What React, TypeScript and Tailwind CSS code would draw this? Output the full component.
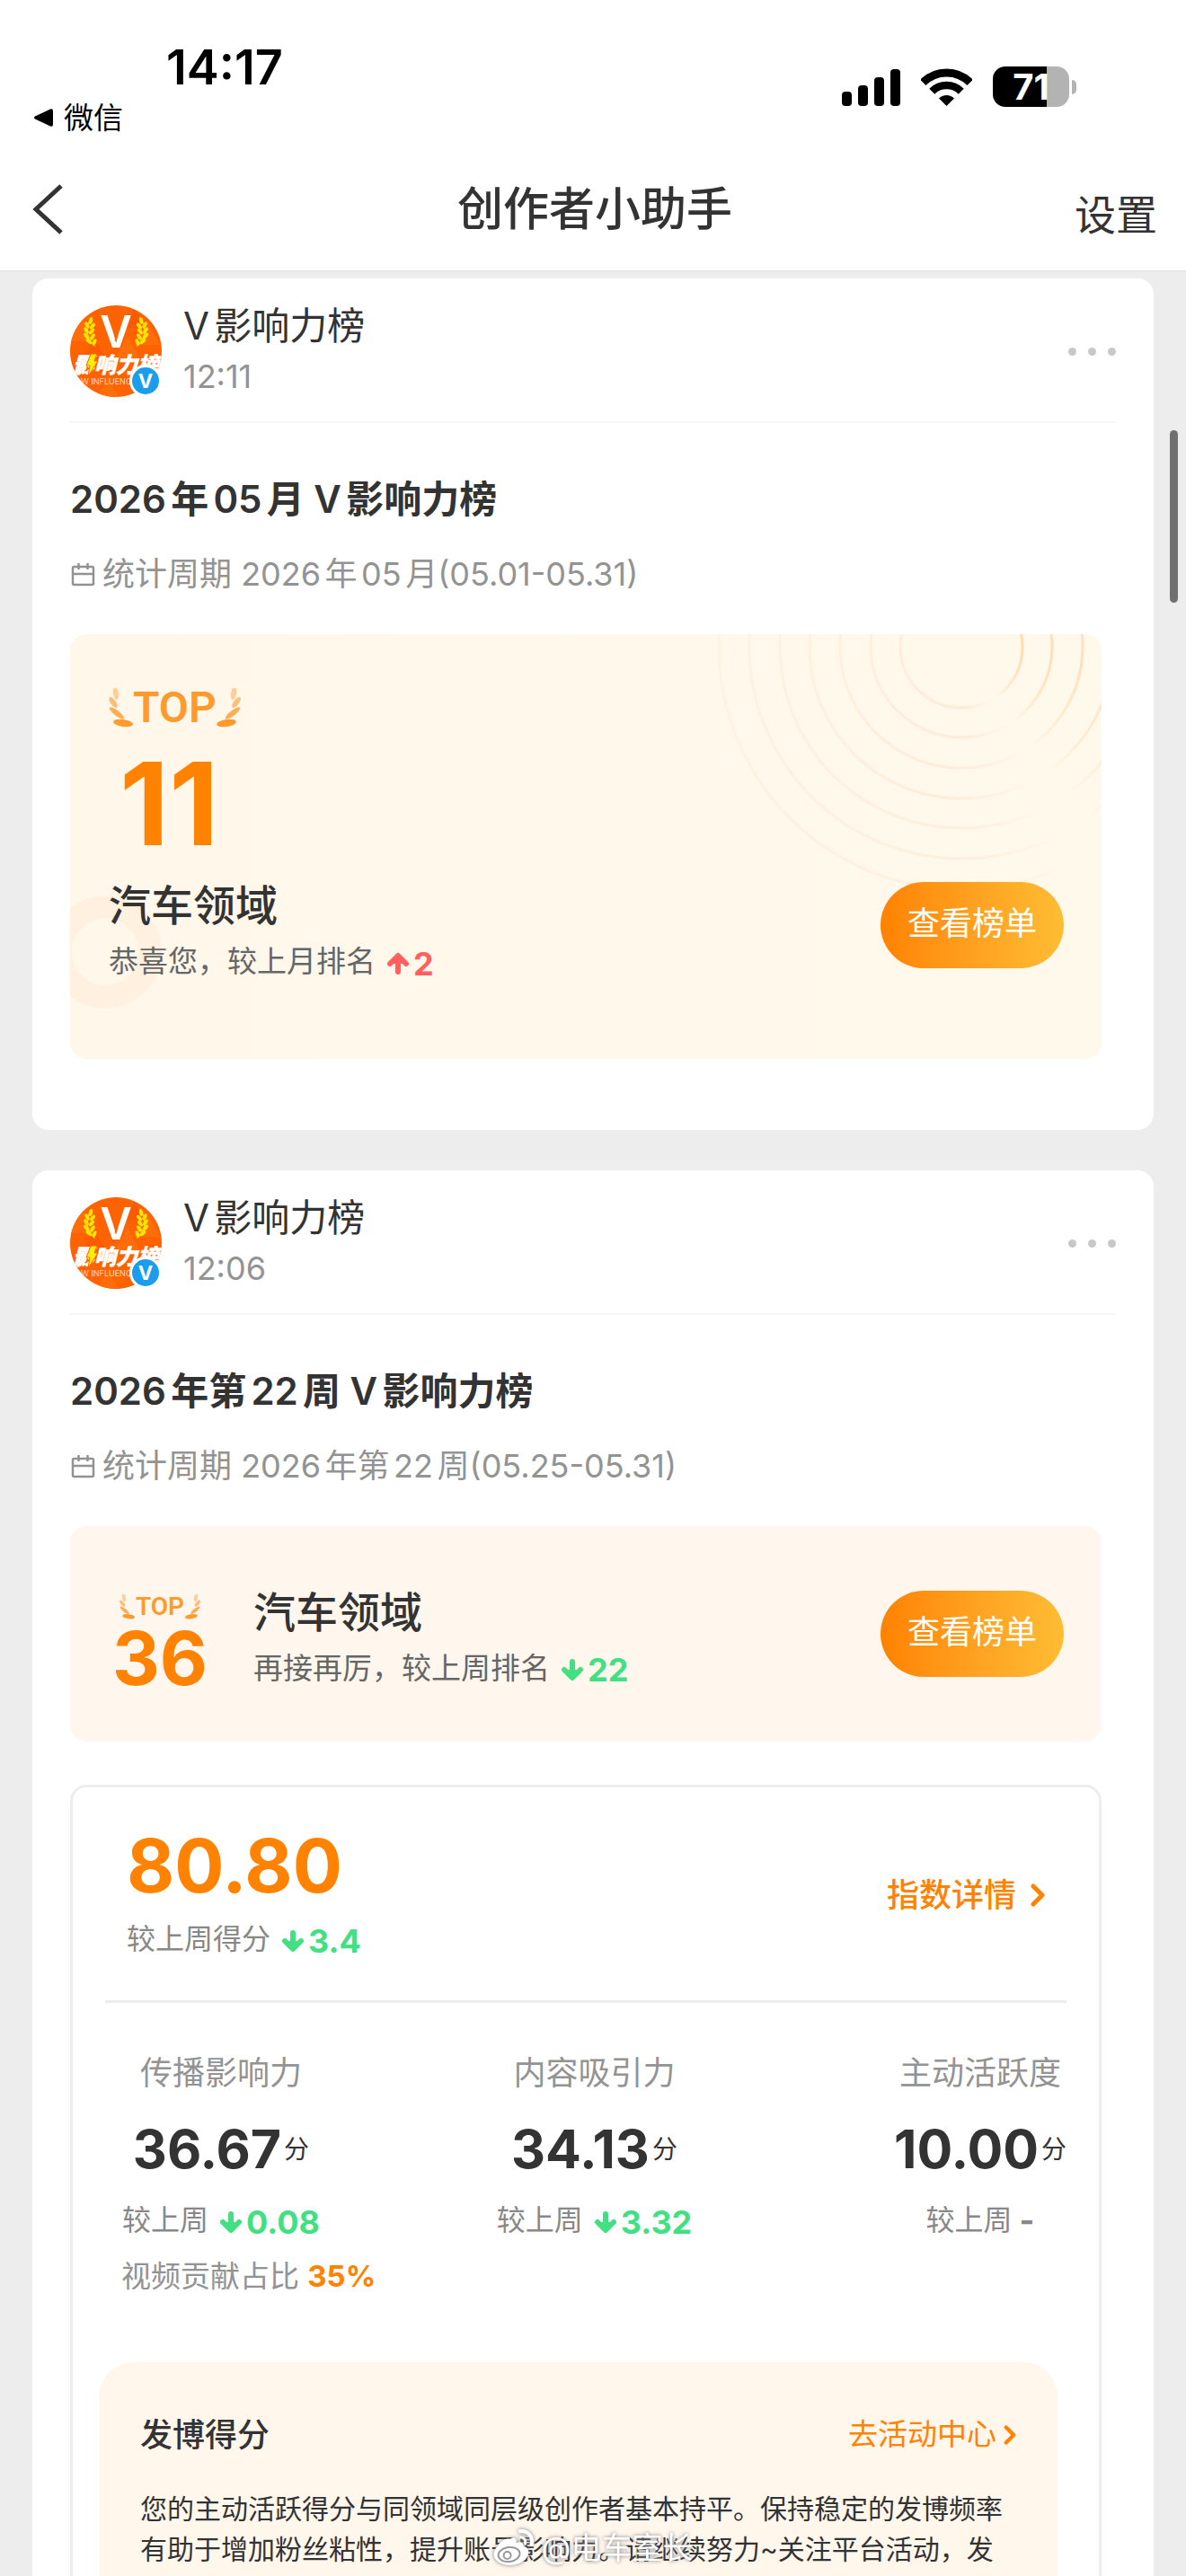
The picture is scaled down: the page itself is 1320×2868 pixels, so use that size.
import type { ReactNode } from 'react';

interface Metric {
  label: string;
  score: string;
  diff: string | null;
  video?: string;
}

interface PostCardProps {
  time: string;
  title: string;
  period: string;
  children: ReactNode;
}

const METRICS: Metric[] = [
  { label: '传播影响力', score: '36.67', diff: '0.08', video: '35%' },
  { label: '内容吸引力', score: '34.13', diff: '3.32' },
  { label: '主动活跃度', score: '10.00', diff: null },
];

const RING_RADII = [68, 101, 135, 169, 202, 236, 270];

// feuilles : cx, cy, demi-largeur, demi-longueur, angle, opacité
const LEAVES = [
  [8, 6, 3, 7, -10, 0.45],
  [5, 16, 3, 7, -36, 0.6],
  [9, 28, 3, 10, -52, 0.8],
  [16, 39, 4, 11, -82, 1],
];

function LaurelLeaf({ className }: { className: string }) {
  return (
    <svg className={className} viewBox="0 0 27 44" fill="#ff9a2e" aria-hidden="true">
      {LEAVES.map(([cx, cy, rx, ry, angle, opacity]) => (
        <ellipse
          key={cy}
          cx={cx}
          cy={cy}
          rx={rx}
          ry={ry}
          opacity={opacity}
          transform={`rotate(${angle} ${cx} ${cy})`}
        />
      ))}
    </svg>
  );
}

function TopBadge({ small = false }: { small?: boolean }) {
  const leaf = small ? 'h-7 w-[17px]' : 'h-11 w-[27px]';
  return (
    <div className={`flex items-center justify-center ${small ? 'gap-px' : ''}`}>
      <LaurelLeaf className={leaf} />
      <span
        className={`font-['Roboto'] font-semibold text-[#ff9a2e] ${small ? 'text-[28px] leading-[28px]' : 'text-[48px] leading-[44px]'}`}
      >
        TOP
      </span>
      <LaurelLeaf className={`${leaf} -scale-x-100`} />
    </div>
  );
}

function ChangeArrow({ up = false }: { up?: boolean }) {
  return (
    <svg
      className={`size-[26px] ${up ? '' : 'rotate-180'}`}
      viewBox="0 0 26 26"
      fill="none"
      stroke="currentColor"
      strokeWidth={6}
      strokeLinecap="round"
      strokeLinejoin="round"
      aria-hidden="true"
    >
      <path d="M13 22V7" />
      <path d="M4 13L13 4l9 9" />
      <path d="M9 11h8" strokeWidth={4} />
    </svg>
  );
}

function Change({ value, up = false }: { value: string; up?: boolean }) {
  return (
    <span
      className={`ml-3 flex items-center gap-1 pt-[3px] text-[36px] font-bold ${up ? 'text-[#ff6060]' : 'text-[#43df83]'}`}
    >
      <ChangeArrow up={up} />
      {value}
    </span>
  );
}

function Chevron({ className }: { className: string }) {
  return (
    <svg
      className={className}
      viewBox="0 0 16 26"
      fill="none"
      stroke="currentColor"
      strokeWidth={5}
      strokeLinecap="round"
      strokeLinejoin="round"
      aria-hidden="true"
    >
      <path d="M3 3l10 10L3 23" />
    </svg>
  );
}

function WheatEar({ transform }: { transform?: string }) {
  return (
    <g transform={transform} fill="#ffe600">
      <path d="M28 46Q14 34 22 15" fill="none" stroke="#ffe600" strokeWidth={1} />
      {[[23, 17, 12], [19, 22, -28], [25, 23, 40], [18, 28, -32], [24, 29, 40], [18, 34, -40], [25, 35, 32], [21, 40, -50], [27, 41, 20]].map(([x, y, a]) => (
        <ellipse key={`${x}-${y}`} cx={x} cy={y} rx={2} ry={4} transform={`rotate(${a} ${x} ${y})`} />
      ))}
    </g>
  );
}

function Avatar() {
  return (
    <div className="relative size-[102px] shrink-0">
      <svg className="size-full rounded-full" viewBox="0 0 102 102" role="img" aria-label="V影响力榜">
        <rect width={102} height={102} fill="#ff6200" />
        <path d="M0 40l14-26 14 26zM70 44l15-28 15 28zM30 102l12-22 12 22zM50 60l14-26 14 26z" fill="#ff6e08" />
        <path d="M14 60l13-24 13 24zM60 26L72 4l12 22z" fill="#fa5a00" />
        <WheatEar />
        <WheatEar transform="translate(102 0) scale(-1 1)" />
        <text x={51} y={47} textAnchor="middle" fontSize={49} fontWeight={600} fill="#fff">V</text>
        <path d="M55 26l-5 14" stroke="#ff6200" strokeWidth={1} />
        <text x={51} y={75} textAnchor="middle" fontSize={24} fontWeight={900} fontStyle="italic" fill="#fff" stroke="#fff" strokeWidth={0.5}>影响力榜</text>
        <path d="M23 54h7l-3 8h4L20 79l2-12h-4z" fill="#ffee00" stroke="#ff6200" strokeWidth={1} />
        <text x={12} y={88} fontSize={9} fill="#ffd9b8">W INFLUENCE</text>
      </svg>
      <span className="absolute right-0 bottom-0 flex size-9 items-center justify-center rounded-full border-[3px] border-white bg-[#1b9dee] text-[22px] leading-none font-bold text-white">
        V
      </span>
    </div>
  );
}

function StatusBar() {
  return (
    <div className="flex h-[165px] items-start justify-between pr-[122px] pl-[37px] text-black">
      <div className="pt-[43px]">
        <div className="pl-[148px] text-[54px] leading-[64px] font-semibold">14:17</div>
        <a href="#wechat" className="flex items-center gap-3 text-[33px] leading-[48px]">
          <svg className="h-5 w-[22px]" viewBox="0 0 22 20" aria-hidden="true">
            <path d="M2 8.500L19 .5q3-1 3 2v15q0 3-3 2L2 11.500q-2-1.500 0-3z" />
          </svg>
          微信
        </a>
      </div>
      <div className="flex items-center pt-[74px]">
        <svg className="h-[42px] w-[66px]" viewBox="0 0 66 42" aria-hidden="true">
          <rect x={0} y={26} width={11} height={16} rx={4} />
          <rect x={18} y={19} width={11} height={23} rx={4} />
          <rect x={36} y={10} width={11} height={32} rx={4} />
          <rect x={54} y={1} width={11} height={41} rx={4} />
        </svg>
        <svg className="ml-[22px] h-[42px] w-[57px]" viewBox="0 0 57 42" fill="none" stroke="#000" aria-hidden="true">
          <clipPath id="wifi-fan">
            <path d="M28.500 42L-4 9.500V-2h65V9.500z" />
          </clipPath>
          <g clipPath="url(#wifi-fan)">
            <circle cx={28.5} cy={42} r={37} strokeWidth={9} />
            <circle cx={28.5} cy={42} r={23} strokeWidth={8.5} />
            <circle cx={28.5} cy={42} r={12} fill="#000" stroke="none" />
          </g>
        </svg>
        <div className="ml-[23px] flex h-[45px] w-[85px] items-center justify-center rounded-[14px] bg-linear-to-r from-black from-71% to-[#b3b3b3] to-71% text-[40px] font-bold text-white">
          71
        </div>
        <div className="ml-[3px] h-4 w-[5px] rounded-r-full bg-[#b3b3b3]" />
      </div>
    </div>
  );
}

function PostCard({ time, title, period, children }: PostCardProps) {
  return (
    <article className="mx-9 shrink-0 rounded-[18px] bg-white px-[42px] pt-[25px] pb-[79px]">
      <div className="flex items-center border-b-2 border-[#f6f6f6] pb-[22px]">
        <Avatar />
        <div className="ml-6 flex-1">
          <p className="text-[42px] leading-[56px] text-[#333]">V影响力榜</p>
          <p className="text-[36px] leading-[56px] text-[#939393]">{time}</p>
        </div>
        <button type="button" aria-label="更多" className="flex gap-[13px]">
          <i className="size-[9px] rounded-full bg-[#c8c8c8]" />
          <i className="size-[9px] rounded-full bg-[#c8c8c8]" />
          <i className="size-[9px] rounded-full bg-[#c8c8c8]" />
        </button>
      </div>
      <div className="pr-4">
        <h2 className="mt-[55px] text-[42px] leading-[60px] font-semibold text-[#333]">{title}</h2>
        <p className="mt-[29px] flex items-center gap-2 text-[36px] leading-[48px] text-[#939393]">
          <svg className="size-7" viewBox="0 0 28 28" fill="none" stroke="currentColor" strokeWidth={2.5} aria-hidden="true">
            <rect x={3} y={6} width={23} height={20} rx={1.5} />
            <path d="M3 14h23M9.500 2v7M19.500 2v7" />
          </svg>
          统计周期 {period}
        </p>
        {children}
      </div>
    </article>
  );
}

function RankButton() {
  return (
    <button
      type="button"
      className="h-24 w-[204px] shrink-0 rounded-full bg-linear-to-r from-[#ff8200] to-[#ffbd33] pb-1 text-[36px] text-white"
    >
      查看榜单
    </button>
  );
}

function BannerArt() {
  return (
    <>
      <svg className="absolute top-0 right-0 h-[310px] w-[460px]" viewBox="0 0 460 310" fill="none" aria-hidden="true">
        <linearGradient id="ring" x1="0" x2="1" y1="0" y2="0">
          <stop offset="0" stopColor="#ffe9d6" stopOpacity="0.7" />
          <stop offset="0.5" stopColor="#ffe9d6" />
          <stop offset="0.76" stopColor="#ffe9d6" stopOpacity="0" />
          <stop offset="0.8" stopColor="#ffdcb0" stopOpacity="0.1" />
          <stop offset="1" stopColor="#ffdcb0" />
        </linearGradient>
        {RING_RADII.map((r) => (
          <circle key={r} cx={304} cy={14} r={r} stroke="url(#ring)" strokeWidth={3} opacity={1.1 - r / 500} />
        ))}
      </svg>
      <svg className="absolute bottom-[56px] left-0 h-[126px] w-[102px]" viewBox="0 0 102 126" fill="none" aria-hidden="true">
        <circle cx={39} cy={63} r={50} stroke="#fff0e0" strokeWidth={25} />
      </svg>
    </>
  );
}

function MetricColumn({ metric, className }: { metric: Metric; className: string }) {
  return (
    <div className={`flex flex-col items-center whitespace-nowrap text-[#939393] ${className}`}>
      <h3 className="text-[36px] leading-[48px]">{metric.label}</h3>
      <p className="mt-[29px] flex items-center gap-[3px] leading-[64px] text-[#333]">
        <strong className="text-[59px] font-bold">{metric.score}</strong>
        <span className="text-[28px]">分</span>
      </p>
      <p className="mt-[23px] flex h-12 items-center text-[32px] text-[#888]">
        较上周
        {metric.diff ? <Change value={metric.diff} /> : <span className="ml-2 text-[36px] font-bold">-</span>}
      </p>
    </div>
  );
}

export default function App() {
  return (
    <div className="relative flex h-screen flex-col overflow-hidden bg-[#ededed] font-['Inter','Noto_Sans_CJK_SC',sans-serif] [text-autospace:normal]">
      <header className="shrink-0 border-b-2 border-[#e6e6e6] bg-white">
        <StatusBar />
        <nav className="grid h-[136px] grid-cols-[1fr_auto_1fr] items-center pr-8 pl-9 text-[#333]">
          <button type="button" aria-label="返回" className="justify-self-start">
            <svg className="h-14 w-[35px]" viewBox="0 0 35 56" fill="none" stroke="currentColor" strokeWidth={5} aria-hidden="true">
              <path d="M32 2L4 28l28 26" />
            </svg>
          </button>
          <h1 className="text-[51px] leading-[64px] font-medium">创作者小助手</h1>
          <button type="button" className="justify-self-end pt-3 text-[46px] leading-[64px]">
            设置
          </button>
        </nav>
      </header>

      <main className="flex min-h-0 flex-1 flex-col gap-[45px] overflow-hidden pt-[7px]">
        <PostCard time="12:11" title="2026年05月 V影响力榜" period="2026年05月(05.01-05.31)">
          <section className="relative mt-[43px] flex items-end justify-between overflow-hidden rounded-[18px] bg-linear-to-r from-[#fff7ea] to-[#fff9ec] pt-[60px] pr-[42px] pb-[84px] pl-[43px]">
            <BannerArt />
            <div className="relative">
              <div className="flex">
                <TopBadge />
              </div>
              <strong className="mt-[21px] block pl-3 text-[128px] leading-[128px] font-bold text-[#ff8200]">11</strong>
              <h3 className="mt-[19px] text-[47px] leading-[60px] font-medium text-[#333]">汽车领域</h3>
              <p className="mt-[9px] flex h-12 items-center text-[33px] text-[#666]">
                恭喜您，较上月排名
                <Change value="2" up />
              </p>
            </div>
            <div className="relative mb-[17px]">
              <RankButton />
            </div>
          </section>
        </PostCard>

        <PostCard time="12:06" title="2026年第22周 V影响力榜" period="2026年第22周(05.25-05.31)">
          <section className="mt-[43px] flex h-60 items-center rounded-[18px] bg-[#fff7ed] pr-[42px] pl-[43px]">
            <div className="w-[114px] pt-[28px] text-center">
              <TopBadge small />
              <strong className="block text-[82px] leading-[88px] font-bold text-[#ff8200]">36</strong>
            </div>
            <div className="ml-[47px] flex-1 pt-2">
              <h3 className="text-[47px] leading-[60px] font-medium text-[#333]">汽车领域</h3>
              <p className="mt-[9px] flex h-12 items-center text-[33px] text-[#666]">
                再接再厉，较上周排名
                <Change value="22" />
              </p>
            </div>
            <RankButton />
          </section>

          <section className="mt-12 rounded-[18px] border-[3px] border-[#ededed] pt-[46px] pb-12">
            <div className="mx-9 flex items-center justify-between border-b-[3px] border-[#ededed] pr-6 pb-11 pl-6">
              <div>
                <strong className="block text-[82px] leading-[84px] font-bold text-[#ff8200]">80.80</strong>
                <p className="mt-[15px] flex h-12 items-center text-[32px] text-[#888]">
                  较上周得分
                  <Change value="3.4" />
                </p>
              </div>
              <a href="#detail" className="flex items-center gap-4 text-[36px] font-medium text-[#ff8200]">
                指数详情
                <Chevron className="h-[26px] w-4" />
              </a>
            </div>

            <div className="mx-9 grid grid-cols-[1fr_auto_1fr] pt-[54px] pl-[19px]">
              <MetricColumn metric={METRICS[0]} className="justify-self-start" />
              <MetricColumn metric={METRICS[1]} className="" />
              <MetricColumn metric={METRICS[2]} className="justify-self-end" />
            </div>
            <p className="mt-[14px] pl-[54px] text-[33px] leading-[48px] text-[#939393]">
              视频贡献占比 <strong className="font-bold text-[#ff8200]">{METRICS[0].video}</strong>
            </p>

            <div className="mt-[72px] mr-[46px] ml-[29px] rounded-[38px] bg-[#fff6ec] px-[46px] pt-[54px] pb-12 text-[#333]">
              <div className="flex items-center justify-between">
                <h3 className="text-[36px] leading-[54px] font-medium">发博得分</h3>
                <a href="#activity" className="flex items-center gap-2 text-[33px] text-[#ff8200]">
                  去活动中心
                  <Chevron className="h-[22px] w-[14px]" />
                </a>
              </div>
              <p className="mt-[33px] text-[30px] leading-[45px]">
                您的主动活跃得分与同领域同层级创作者基本持平。保持稳定的发博频率有助于增加粉丝粘性，提升账号影响力。请继续努力~关注平台活动，发
              </p>
            </div>
          </section>
        </PostCard>
      </main>

      <div className="absolute top-[479px] right-[9px] h-48 w-[9px] rounded-full bg-[#707070]" />

      <div className="absolute bottom-[8px] left-1/2 flex -translate-x-1/2 items-center gap-2 text-[34px] leading-[46px] text-white [filter:drop-shadow(0_0_2px_#777)]">
        <svg className="h-11 w-[46px]" viewBox="0 0 46 44" fill="none" stroke="#fff" strokeLinecap="round" aria-hidden="true">
          <path
            d="M19 12c4-3 8-1 7 4 5-2 9 0 8 4 5 1 7 5 5 10-3 7-11 11-20 11C9 41 1 36 1 29c0-7 11-20 18-17z"
            fill="#fff"
            stroke="none"
          />
          <ellipse cx={18} cy={29} rx={12} ry={8} stroke="#999" strokeWidth={2} transform="rotate(-8 18 29)" />
          <circle cx={16} cy={30} r={4} stroke="#999" strokeWidth={2} />
          <path d="M30 3c9-1 15 6 13 15" strokeWidth={4} />
          <path d="M31 10c4 0 6 3 5 7" strokeWidth={3} />
        </svg>
        @电车室长
      </div>
    </div>
  );
}
